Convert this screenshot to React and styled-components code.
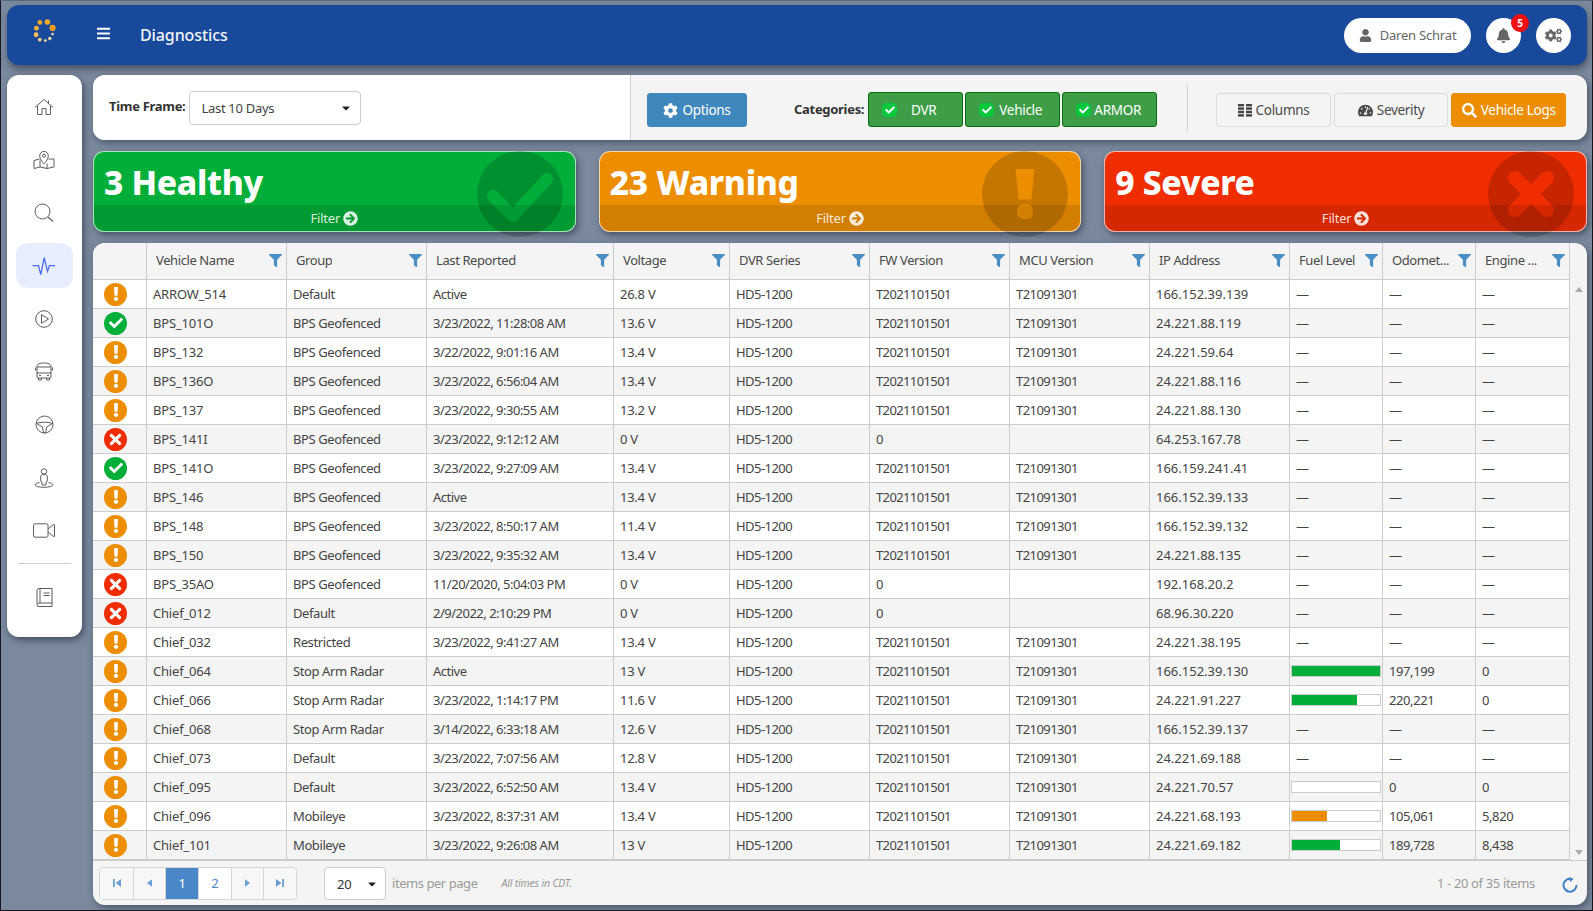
import React from "react";
import styled, { createGlobalStyle } from "styled-components";
import {
  FaBars, FaUser, FaBell, FaCogs, FaCog, FaCheck, FaTachometerAlt, FaSearch,
  FaFilter, FaArrowCircleRight, FaExclamation, FaTimes, FaCaretDown,
} from "react-icons/fa";

const Global = createGlobalStyle`
  html, body { margin: 0; padding: 0; height: 100%; overflow: hidden; background: #7a899d; }
  * { box-sizing: border-box; }
  #root { height: 100%; }
`;

const Page = styled.div`
  height: 911px;
  width: 1593px;
  padding: 4px 5px 5px 6px;
  background: #7a899d;
  border-left: 1px solid #14181e;
  border-right: 1px solid #14181e;
  border-bottom: 1px solid #14181e;
  border-top: 1px solid #5c6a7d;
  font-family: "Noto Sans", sans-serif;
  font-size: 13px;
  color: #444;
  display: flex;
  flex-direction: column;
  gap: 10px;
`;

const TopBar = styled.header`
  flex: 0 0 60px;
  background: #19499a;
  border-radius: 12px;
  box-shadow: 1px 4px 7px rgba(30, 40, 55, 0.55);
  display: flex;
  align-items: center;
  padding: 0 16px 0 26px;
`;
const Logo = styled.svg`
  width: 24px;
  height: 24px;
  margin-top: -8px;
`;
const Burger = styled.span`
  display: flex;
  margin-left: 39px;
  color: #fff;
  font-size: 15px;
  margin-top: -4px;
`;
const Title = styled.h1`
  margin: 0 0 0 29px;
  font-size: 16px;
  font-weight: 500;
  letter-spacing: -0.1px;
  color: #f2f5fa;
`;
const TopRight = styled.div`
  margin-left: auto;
  display: flex;
  gap: 15px;
  align-items: center;
`;
const UserPill = styled.div`
  width: 127px;
  height: 35px;
  border-radius: 18px;
  background: #fff;
  color: #666;
  display: flex;
  align-items: center;
  justify-content: center;
  gap: 8px;
  font-size: 13px;
  letter-spacing: -0.2px;
  svg { font-size: 13px; }
`;
const RoundBtn = styled.div`
  position: relative;
  width: 35px;
  height: 35px;
  border-radius: 50%;
  background: #fff;
  color: #666;
  display: flex;
  align-items: center;
  justify-content: center;
  font-size: 15px;
`;
const Badge = styled.span`
  position: absolute;
  top: -4px;
  right: -8px;
  width: 18px;
  height: 18px;
  border-radius: 50%;
  background: #f01010;
  color: #fff;
  font-size: 10px;
  font-weight: 700;
  display: flex;
  align-items: center;
  justify-content: center;
`;

const Body = styled.div`
  flex: 1;
  min-height: 0;
  display: flex;
  gap: 11px;
  align-items: flex-start;
`;
const Side = styled.nav`
  flex: 0 0 74px;
  height: 562px;
  background: #fff;
  border-radius: 12px;
  box-shadow: 2px 3px 7px rgba(30, 40, 55, 0.6);
  padding: 5px 9px 0;
  display: flex;
  flex-direction: column;
  align-items: center;
`;
const SideItem = styled.div`
  width: 57px;
  height: ${(p) => p.$h || 53}px;
  flex: 0 0 auto;
  border-radius: 12px;
  background: ${(p) => (p.$active ? "#e9eefe" : "transparent")};
  display: flex;
  align-items: center;
  justify-content: center;
  padding-right: 1px;
  margin: ${(p) => (p.$active ? "4px 0" : "0")};
  svg { fill: none; stroke: ${(p) => (p.$active ? "#4a6cf0" : "#5c5c5c")}; stroke-width: 1; }
`;
const SideRule = styled.hr`
  width: 53px;
  height: 1px;
  border: 0;
  background: #cfcfcf;
  margin: 6px 0 7px;
`;

const Main = styled.main`
  flex: 1;
  min-width: 0;
  height: 830px;
  display: flex;
  flex-direction: column;
  gap: 11px;
`;

const Toolbar = styled.section`
  flex: 0 0 65px;
  border-radius: 12px;
  background: #f4f4f4;
  box-shadow: 2px 3px 7px rgba(30, 40, 55, 0.5);
  display: flex;
  overflow: hidden;
`;
const ToolLeft = styled.div`
  flex: 0 0 538px;
  background: #fff;
  border-right: 1px solid #cfcfcf;
  display: flex;
  align-items: center;
  padding: 0 0 0 16px;
  gap: 4px;
`;
const BoldLabel = styled.label`
  font-weight: 700;
  font-size: 13px;
  letter-spacing: -0.3px;
  color: #333;
  margin-top: -4px;
`;
const Select = styled.div`
  flex: none;
  width: ${(p) => p.$w || 172}px;
  height: ${(p) => p.$h || 34}px;
  border: 1px solid #ccc;
  border-radius: 4px;
  background: #fff;
  display: flex;
  align-items: center;
  justify-content: space-between;
  padding: 0 8px 0 11px;
  font-size: 13px;
  letter-spacing: -0.3px;
  color: #444;
  svg { font-size: 12px; color: #222; }
`;
const ToolRight = styled.div`
  flex: 1;
  min-width: 0;
  display: flex;
  align-items: center;
  padding-left: 16px;
`;
const Btn = styled.button`
  flex: none;
  height: 34px;
  width: ${(p) => p.$w}px;
  margin-top: 5px;
  border-radius: 3px;
  border: 1px solid ${(p) => p.$border};
  background: ${(p) => p.$bg};
  color: ${(p) => p.$fg};
  font: inherit;
  font-size: 13.5px;
  letter-spacing: -0.3px;
  display: flex;
  align-items: center;
  justify-content: center;
  gap: 4px;
  padding: 0;
  svg { font-size: 15px; }
`;
const CatLabel = styled(BoldLabel)`
  margin-left: 47px;
  margin-right: 4px;
  margin-top: 2px;
`;
const CatBtn = styled.button`
  flex: none;
  width: 95px;
  height: 35px;
  margin-right: 2px;
  margin-top: 4px;
  background: #3d9e47;
  border: 1px solid #0c6c12;
  border-radius: 3px;
  color: #fff;
  font: inherit;
  font-size: 13.5px;
  letter-spacing: -0.3px;
  display: flex;
  align-items: center;
  padding: 0 12px 0 13px;
`;
const CatTick = styled.span`
  width: 15px;
  height: 14px;
  border-radius: 5px;
  background: #05c93d;
  color: #fff;
  display: flex;
  align-items: center;
  justify-content: center;
  font-size: 10px;
`;
const CatName = styled.span`
  flex: 1;
  text-align: center;
`;
const ToolRule = styled.div`
  flex: none;
  width: 1px;
  height: 46px;
  background: #cfcfcf;
  margin: 0 28px 0 28px;
`;
const ToolGroup = styled.div`
  display: flex;
  gap: 3px;
`;

const Cards = styled.section`
  flex: 0 0 81px;
  display: grid;
  grid-template-columns: repeat(3, 1fr);
  gap: 23px;
`;
const Card = styled.div`
  position: relative;
  background: ${(p) => p.$c};
  border: 1px solid rgba(255, 255, 255, 0.65);
  border-radius: 11px;
  box-shadow: 2px 3px 6px rgba(30, 40, 55, 0.55);
  display: flex;
  flex-direction: column;
  color: #fff;
`;
const CardTitle = styled.div`
  flex: 1;
  font-size: 33.5px;
  font-weight: 800;
  line-height: 1;
  padding: 14px 0 0 10px;
  position: relative;
  z-index: 3;
  letter-spacing: -0.3px;
`;
const CardBand = styled.div`
  flex: 0 0 26px;
  position: relative;
  z-index: 2;
  background: rgba(0, 0, 0, 0.11);
  border-radius: 0 0 10px 10px;
  display: flex;
  align-items: center;
  justify-content: center;
  gap: 3px;
  font-size: 13px;
  letter-spacing: -0.2px;
  color: rgba(255, 255, 255, 0.85);
  svg { font-size: 15px; }
`;
const CardBadge = styled.div`
  position: absolute;
  top: -1px;
  right: 12px;
  width: 86px;
  height: 86px;
  border-radius: 50%;
  background: rgba(0, 0, 0, 0.17);
  z-index: 1;
  display: flex;
  align-items: center;
  justify-content: center;
`;

const TablePanel = styled.section`
  flex: 1;
  min-height: 0;
  background: #f4f4f4;
  border-radius: 12px;
  box-shadow: 2px 3px 7px rgba(30, 40, 55, 0.5);
  display: flex;
  flex-direction: column;
  overflow: hidden;
`;
const TableArea = styled.div`
  display: flex;
  flex: 0 0 617px;
`;
const Grid = styled.table`
  width: 1477px;
  height: 617px;
  flex: 0 0 1477px;
  table-layout: fixed;
  border-collapse: separate;
  border-spacing: 0;
`;
const Th = styled.th`
  height: 37px;
  padding: 0 0 2px 9px;
  background: #f4f4f4;
  border-right: 1px solid #ccc;
  border-bottom: 1px solid #ccc;
  font-weight: 400;
  font-size: 13px;
  letter-spacing: -0.4px;
  color: #4a4a4a;
  text-align: left;
`;
const ThInner = styled.div`
  display: flex;
  align-items: center;
  justify-content: space-between;
  padding-right: 4px;
  white-space: nowrap;
  svg { color: #4a8fc4; font-size: 13px; flex: none; }
`;
const ThLabel = styled.span`
  overflow: hidden;
  text-overflow: ellipsis;
`;
const Tr = styled.tr`
  background: ${(p) => (p.$alt ? "#f4f4f4" : "#fff")};
`;
const Td = styled.td`
  height: 29px;
  padding: 0 0 0 6px;
  border-right: 1px solid #ccc;
  border-bottom: 1px solid #ccc;
  font-size: 13px;
  color: #444;
  white-space: nowrap;
  overflow: hidden;
  letter-spacing: ${(p) => p.$ls ?? -0.2}px;
`;
const StatusCell = styled(Td)`
  padding-left: 11px;
`;
const Status = styled.span`
  width: 23px;
  height: 23px;
  border-radius: 50%;
  background: ${(p) => p.$c};
  color: #fff;
  display: flex;
  align-items: center;
  justify-content: center;
  font-size: 14px;
`;
const Bar = styled.div`
  width: 90px;
  height: 12px;
  margin-left: -5px;
  border: 1px solid #ccc;
  background: #fff;
`;
const BarFill = styled.div`
  height: 100%;
  background: ${(p) => p.$c};
`;
const Gutter = styled.div`
  flex: 1;
  position: relative;
`;
const ArrowUp = styled.span`
  position: absolute;
  top: 44px;
  left: 5px;
  width: 0;
  height: 0;
  border: 4px solid transparent;
  border-top: 0;
  border-bottom: 5px solid #aaa;
`;
const ArrowDown = styled.span`
  position: absolute;
  bottom: 5px;
  left: 5px;
  width: 0;
  height: 0;
  border: 4px solid transparent;
  border-bottom: 0;
  border-top: 5px solid #aaa;
`;

const Footer = styled.footer`
  flex: 1;
  border-top: 1px solid #ccc;
  display: flex;
  align-items: center;
  padding: 0 9px 0 6px;
`;
const Pager = styled.div`
  display: flex;
  height: 33px;
  width: 198px;
  border: 1px solid #d6d6d6;
  border-radius: 4px;
  overflow: hidden;
  background: #fff;
`;
const PageBtn = styled.span`
  flex: 1;
  display: flex;
  align-items: center;
  justify-content: center;
  border-left: 1px solid ${(p) => (p.$first ? "transparent" : "#d6d6d6")};
  background: ${(p) => (p.$on ? "#4a87c9" : p.$tool ? "#f7f7f7" : "#fff")};
  color: ${(p) => (p.$on ? "#fff" : "#4a87c9")};
  font-size: 13px;
  svg { fill: #6a9fd6; }
`;
const PerPage = styled(Select)`
  margin-left: 27px;
  margin-top: 1px;
  padding: 0 7px 0 12px;
  color: #333;
`;
const Muted = styled.span`
  color: #9a9a9a;
  font-size: 13px;
  margin-left: 6px;
  letter-spacing: -0.45px;
`;
const Note = styled.span`
  color: #9a9a9a;
  font-size: 10.5px;
  font-style: italic;
  margin-left: 24px;
  letter-spacing: -0.2px;
`;
const Count = styled.span`
  margin-left: auto;
  color: #9a9a9a;
  font-size: 13px;
  letter-spacing: -0.35px;
`;
const Refresh = styled.svg`
  width: 16px;
  height: 16px;
  margin-left: 27px;
  margin-top: 3px;
  fill: none;
  stroke: #3f82c9;
  stroke-width: 2;
`;

const cols = [54, 140, 140, 187, 116, 140, 140, 140, 140, 93, 93, 94];
const heads = ["", "Vehicle Name", "Group", "Last Reported", "Voltage", "DVR Series", "FW Version", "MCU Version", "IP Address", "Fuel Level", "Odomet...", "Engine ..."];

const G = "#00ae39", O = "#ec8e00", R = "#f02d00";
const BG = "BPS Geofenced";
const rows = [
  ["w", "ARROW_514", "Default", "Active", "26.8 V", 1, "166.152.39.139"],
  ["h", "BPS_101O", BG, "3/23/2022, 11:28:08 AM", "13.6 V", 1, "24.221.88.119"],
  ["w", "BPS_132", BG, "3/22/2022, 9:01:16 AM", "13.4 V", 1, "24.221.59.64"],
  ["w", "BPS_136O", BG, "3/23/2022, 6:56:04 AM", "13.4 V", 1, "24.221.88.116"],
  ["w", "BPS_137", BG, "3/23/2022, 9:30:55 AM", "13.2 V", 1, "24.221.88.130"],
  ["s", "BPS_141I", BG, "3/23/2022, 9:12:12 AM", "0 V", 0, "64.253.167.78"],
  ["h", "BPS_141O", BG, "3/23/2022, 9:27:09 AM", "13.4 V", 1, "166.159.241.41"],
  ["w", "BPS_146", BG, "Active", "13.4 V", 1, "166.152.39.133"],
  ["w", "BPS_148", BG, "3/23/2022, 8:50:17 AM", "11.4 V", 1, "166.152.39.132"],
  ["w", "BPS_150", BG, "3/23/2022, 9:35:32 AM", "13.4 V", 1, "24.221.88.135"],
  ["s", "BPS_35AO", BG, "11/20/2020, 5:04:03 PM", "0 V", 0, "192.168.20.2"],
  ["s", "Chief_012", "Default", "2/9/2022, 2:10:29 PM", "0 V", 0, "68.96.30.220"],
  ["w", "Chief_032", "Restricted", "3/23/2022, 9:41:27 AM", "13.4 V", 1, "24.221.38.195"],
  ["w", "Chief_064", "Stop Arm Radar", "Active", "13 V", 1, "166.152.39.130", [100, G], "197,199", "0"],
  ["w", "Chief_066", "Stop Arm Radar", "3/23/2022, 1:14:17 PM", "11.6 V", 1, "24.221.91.227", [74, G], "220,221", "0"],
  ["w", "Chief_068", "Stop Arm Radar", "3/14/2022, 6:33:18 AM", "12.6 V", 1, "166.152.39.137"],
  ["w", "Chief_073", "Default", "3/23/2022, 7:07:56 AM", "12.8 V", 1, "24.221.69.188"],
  ["w", "Chief_095", "Default", "3/23/2022, 6:52:50 AM", "13.4 V", 1, "24.221.70.57", [0, G], "0", "0"],
  ["w", "Chief_096", "Mobileye", "3/23/2022, 8:37:31 AM", "13.4 V", 1, "24.221.68.193", [40, O], "105,061", "5,820"],
  ["w", "Chief_101", "Mobileye", "3/23/2022, 9:26:08 AM", "13 V", 1, "24.221.69.182", [55, G], "189,728", "8,438"],
];

const statusMap = {
  w: [O, <FaExclamation key="w" />],
  h: [G, <FaCheck key="h" />],
  s: [R, <FaTimes key="s" style={{ fontSize: 17 }} />],
};

const IconBox = ({ w, h, children }) => (
  <svg width={w} height={h} viewBox={`0 0 ${w} ${h}`}>{children}</svg>
);

const LogoMark = () => (
  <Logo viewBox="100 58 70 70">
    <circle cx="120" cy="68" r="7" fill="#f7a92a" />
    <circle cx="142" cy="67" r="8" fill="#f7a92a" />
    <circle cx="157" cy="84" r="9" fill="#f59f1c" />
    <circle cx="157" cy="102" r="4" fill="#e9d3a8" />
    <circle cx="149" cy="115" r="5" fill="#f0d9a8" />
    <circle cx="136" cy="121" r="4" fill="#f5dda8" />
    <circle cx="120" cy="118" r="5.5" fill="#f6cf80" />
    <circle cx="109" cy="104" r="7" fill="#f8c160" />
    <circle cx="110" cy="85" r="7" fill="#f7b038" />
  </Logo>
);

const ColumnsIcon = () => (
  <svg width="14" height="13" viewBox="0 0 14 13" fill="#444">
    {[0, 3.4, 6.8, 10.2].map((y) => (
      <g key={y}>
        <rect x="0" y={y} width="6" height="2.4" />
        <rect x="8" y={y} width="6" height="2.4" />
      </g>
    ))}
  </svg>
);

const sideIcons = [
  <IconBox w={20} h={18} key="home"><path d="M1 9.5 10 1.5l9 8M3.5 8v8.5h4.5v-6h4v6h4.5V8M14.5 2.5v2.5" /></IconBox>,
  <IconBox w={22} h={20} key="map"><path d="M6.5 9 1 10.5v8l6-1.5 7 1.5 7-1.5v-8L15.5 9M7 10.5V17M14 13.5V18.5" /><path d="M11 14S6.7 9.5 6.7 5.7a4.3 4.3 0 0 1 8.6 0C15.3 9.5 11 14 11 14Z" /><circle cx="11" cy="5.7" r="1.5" /></IconBox>,
  <IconBox w={20} h={19} key="search"><circle cx="8.5" cy="8.5" r="7.5" /><path d="m14 14 5 4.5" strokeWidth="1.2" /></IconBox>,
  <IconBox w={24} h={20} key="pulse"><path d="M.5 9.7h6l2.3 9 3.4-17 3.3 13.6 2-5.6h5.7" strokeWidth="1.3" /></IconBox>,
  <IconBox w={18} h={18} key="play"><circle cx="9" cy="9" r="8.3" /><path d="M6.5 4.7v8.6L13.5 9Z" /></IconBox>,
  <IconBox w={20} h={19} key="bus"><path d="M3 4.5C3 2 6 1 10 1s7 1 7 3.5V15a1 1 0 0 1-1 1H4a1 1 0 0 1-1-1ZM3 5h14M3 11h14M1.5 5.5v3M18.5 5.5v3M4.5 16v2h3v-2M12.5 16v2h3v-2M5 13.5h2M13 13.5h2" /></IconBox>,
  <IconBox w={19} h={19} key="wheel"><circle cx="9.5" cy="9.5" r="8.5" /><path d="M1.5 8.5C5 6.7 14 6.7 17.5 8.5L11.5 12l-.8 5.8h-2.4L7.5 12Z" /></IconBox>,
  <IconBox w={20} h={20} key="person"><circle cx="10" cy="3.4" r="2.7" /><path d="M6.7 13V8.8c0-1.6 1-2.3 3.3-2.3s3.3.7 3.3 2.3V13L12 14v3h-4v-3Z" /><path d="M5.5 14.5C3 15 1 16 1 17s4 2.3 9 2.3 9-1.3 9-2.3-2-2-4.5-2.5" /></IconBox>,
  <IconBox w={22} h={15} key="video"><rect x=".5" y=".8" width="14.5" height="13.4" rx="1.5" /><path d="M15 6 20.5 1.5h1v12h-1L15 9" /></IconBox>,
  <IconBox w={17} h={19} key="book"><path d="M1 15.5V2.5a2 2 0 0 1 2-2h13V15H3a2 2 0 0 0-2 1.8A1.8 1.8 0 0 0 3 18.5h13V15M4 .7V15M7.5 5h6M7.5 7.5h6" /></IconBox>,
];

const Card3 = ({ color, title, icon }) => (
  <Card $c={color}>
    <CardBadge>{icon(color)}</CardBadge>
    <CardTitle>{title}</CardTitle>
    <CardBand>Filter<FaArrowCircleRight /></CardBand>
  </Card>
);

export default function App() {
  return (
    <Page>
      <Global />
      <TopBar>
        <LogoMark />
        <Burger><FaBars /></Burger>
        <Title>Diagnostics</Title>
        <TopRight>
          <UserPill><FaUser />Daren Schrat</UserPill>
          <RoundBtn><FaBell /><Badge>5</Badge></RoundBtn>
          <RoundBtn><FaCogs style={{ fontSize: 17 }} /></RoundBtn>
        </TopRight>
      </TopBar>
      <Body>
        <Side>
          {sideIcons.slice(0, 3).map((ic, i) => <SideItem key={i}>{ic}</SideItem>)}
          <SideItem $active $h={45}>{sideIcons[3]}</SideItem>
          {sideIcons.slice(4, 9).map((ic, i) => <SideItem key={i}>{ic}</SideItem>)}
          <SideRule />
          <SideItem>{sideIcons[9]}</SideItem>
        </Side>
        <Main>
          <Toolbar>
            <ToolLeft>
              <BoldLabel>Time Frame:</BoldLabel>
              <Select>Last 10 Days<FaCaretDown /></Select>
            </ToolLeft>
            <ToolRight>
              <Btn $w={100} $bg="#3f88bd" $border="#3f88bd" $fg="#fff"><FaCog />Options</Btn>
              <CatLabel>Categories:</CatLabel>
              {["DVR", "Vehicle", "ARMOR"].map((c) => (
                <CatBtn key={c}><CatTick><FaCheck /></CatTick><CatName>{c}</CatName></CatBtn>
              ))}
              <ToolRule />
              <ToolGroup>
                <Btn $w={114.6} $bg="#f4f4f4" $border="#dcdcdc" $fg="#4a4a4a"><ColumnsIcon />Columns</Btn>
                <Btn $w={114.6} $bg="#f4f4f4" $border="#dcdcdc" $fg="#4a4a4a"><FaTachometerAlt />Severity</Btn>
                <Btn $w={114.6} $bg="#ec8e00" $border="#ec8e00" $fg="#fff"><FaSearch />Vehicle Logs</Btn>
              </ToolGroup>
            </ToolRight>
          </Toolbar>
          <Cards>
            <Card3 color={G} title="3 Healthy" icon={(c) => (
              <svg width="70" height="60" viewBox="0 0 70 60"><path d="M8 32l20 20 34-37" fill="none" stroke={c} strokeWidth="12" strokeLinecap="round" strokeLinejoin="round" /></svg>
            )} />
            <Card3 color={O} title="23 Warning" icon={(c) => (
              <svg width="24" height="50" viewBox="0 0 24 50"><path d="M3 0h18l-3 30H6Z" fill={c} stroke={c} strokeWidth="1" strokeLinejoin="round" /><rect x="4" y="35" width="16" height="15" rx="6" fill={c} /></svg>
            )} />
            <Card3 color={R} title="9 Severe" icon={(c) => (
              <svg width="50" height="50" viewBox="0 0 50 50"><path d="M9 9l32 32M41 9 9 41" fill="none" stroke={c} strokeWidth="14" strokeLinecap="round" /></svg>
            )} />
          </Cards>
          <TablePanel>
            <TableArea>
              <Grid>
                <colgroup>{cols.map((w, i) => <col key={i} width={w} />)}</colgroup>
                <thead>
                  <tr>
                    {heads.map((h, i) => (
                      <Th key={i}>
                        {h && <ThInner><ThLabel>{h}</ThLabel><FaFilter /></ThInner>}
                      </Th>
                    ))}
                  </tr>
                </thead>
                <tbody>
                  {rows.map((r, i) => {
                    const [c, ic] = statusMap[r[0]];
                    return (
                      <Tr key={r[1]} $alt={i % 2 === 1}>
                        <StatusCell><Status $c={c}>{ic}</Status></StatusCell>
                        <Td>{r[1]}</Td>
                        <Td $ls={-0.4}>{r[2]}</Td>
                        <Td $ls={-0.5}>{r[3]}</Td>
                        <Td $ls={-0.25}>{r[4]}</Td>
                        <Td $ls={-0.55}>HD5-1200</Td>
                        <Td $ls={-0.62}>{r[5] ? "T2021101501" : "0"}</Td>
                        <Td $ls={-0.55}>{r[5] ? "T21091301" : ""}</Td>
                        <Td $ls={0}>{r[6]}</Td>
                        <Td>
                          {r[7] ? <Bar><BarFill $c={r[7][1]} style={{ width: `${r[7][0]}%` }} /></Bar> : "—"}
                        </Td>
                        <Td $ls={-0.4}>{r[8] || "—"}</Td>
                        <Td $ls={-0.4}>{r[9] || "—"}</Td>
                      </Tr>
                    );
                  })}
                </tbody>
              </Grid>
              <Gutter><ArrowUp /><ArrowDown /></Gutter>
            </TableArea>
            <Footer>
              <Pager>
                <PageBtn $first $tool><svg width="8" height="8" viewBox="0 0 9 9"><path d="M0 0h2v9H0zM9 0v9L3 4.5z" /></svg></PageBtn>
                <PageBtn $tool><svg width="5" height="8" viewBox="0 0 6 9"><path d="M6 0v9L0 4.5z" /></svg></PageBtn>
                <PageBtn $on>1</PageBtn>
                <PageBtn>2</PageBtn>
                <PageBtn $tool><svg width="5" height="8" viewBox="0 0 6 9"><path d="M0 0v9l6-4.5z" /></svg></PageBtn>
                <PageBtn $tool><svg width="8" height="8" viewBox="0 0 9 9"><path d="M0 0v9l6-4.5zM7 0h2v9H7z" /></svg></PageBtn>
              </Pager>
              <PerPage $w={62} $h={33}>20<FaCaretDown /></PerPage>
              <Muted>items per page</Muted>
              <Note>All times in CDT.</Note>
              <Count>1 - 20 of 35 items</Count>
              <Refresh viewBox="0 0 16 16"><path d="M10.5 2.2A6.5 6.5 0 1 0 14.5 8" /><path d="M7.5 0 11.5 2.3 8 5" fill="#3f82c9" stroke="none" /></Refresh>
            </Footer>
          </TablePanel>
        </Main>
      </Body>
    </Page>
  );
}
